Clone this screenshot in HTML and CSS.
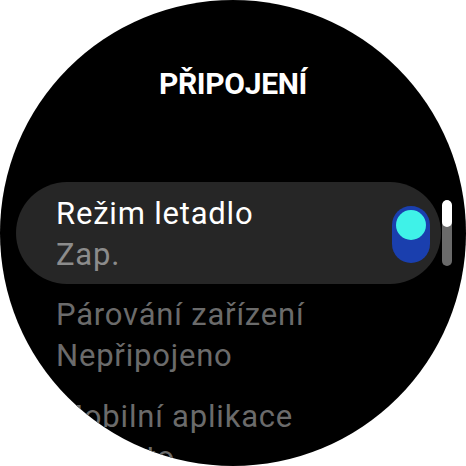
FILE: index.html
```html
<!DOCTYPE html>
<html lang="cs">
<head>
<meta charset="utf-8">
<link rel="stylesheet" href="styles.css">
</head>
<body>
<div class="watch">
  <h1 class="title">PŘIPOJENÍ</h1>
  <div class="list">
    <div class="card">
      <div class="texts">
        <div class="primary">Režim letadlo</div>
        <div class="secondary">Zap.</div>
      </div>
      <div class="toggle"><div class="knob"></div></div>
    </div>
    <div class="item">
      <div class="dim">Párování zařízení</div>
      <div class="dim">Nepřipojeno</div>
    </div>
    <div class="item">
      <div class="dim">Mobilní aplikace</div>
      <div class="dim">Vypnuto</div>
    </div>
  </div>
  <div class="scrollbar"><div class="thumb"></div></div>
</div>
</body>
</html>
```
FILE: styles.css
```css
html, body {
  margin: 0;
  padding: 0;
  background: #ffffff;
}
.watch {
  position: relative;
  width: 466px;
  height: 466px;
  border-radius: 50%;
  background: #000000;
  overflow: hidden;
  box-sizing: border-box;
  padding-top: 66px;
  font-family: Roboto, "Noto Sans", sans-serif;
}
.title {
  margin: 0;
  text-align: center;
  color: #ffffff;
  font-weight: 700;
  font-size: 30px;
  line-height: 36px;
  letter-spacing: -0.3px;
}
.list {
  margin-top: 80px;
  display: flex;
  flex-direction: column;
}
.card {
  margin-left: 16px;
  width: 425px;
  height: 102px;
  box-sizing: border-box;
  padding: 11px 11px 9px 40px;
  border-radius: 51px;
  background: #262626;
  display: flex;
  align-items: center;
  justify-content: space-between;
}
.primary, .secondary, .dim {
  font-size: 31px;
  line-height: 41px;
  letter-spacing: 0.8px;
  white-space: nowrap;
}
.primary { color: #ffffff; }
.secondary { color: #8c8c8c; }
.item {
  padding: 10px 0 10px 56px;
}
.dim { color: #6b6b6b; }
.toggle {
  width: 38px;
  height: 57px;
  box-sizing: border-box;
  padding: 4px;
  border-radius: 19px;
  background: #1a3fae;
  display: flex;
  flex-direction: column;
}
.knob {
  width: 30px;
  height: 30px;
  border-radius: 50%;
  background: #3ff2e8;
}
.scrollbar {
  position: absolute;
  left: 442px;
  top: 200px;
  width: 10px;
  height: 66px;
  border-radius: 5px;
  background: #6a6a6a;
  overflow: hidden;
}
.thumb {
  height: 27px;
  border-radius: 5px;
  background: #ffffff;
}
```
